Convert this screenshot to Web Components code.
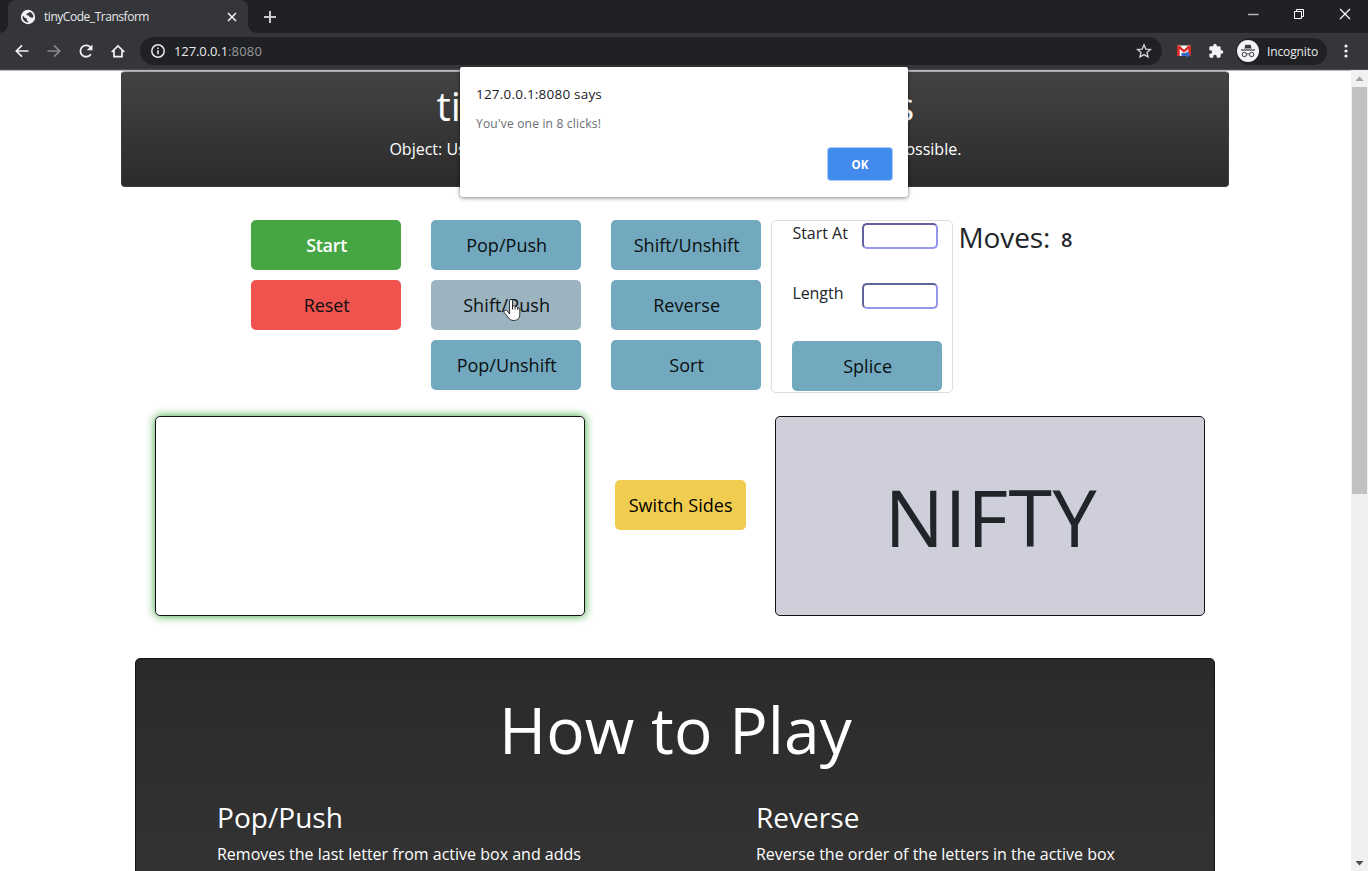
<!DOCTYPE html>
<html lang="en">
<head>
<meta charset="utf-8">
<title>tinyCode_Transform</title>
<style>
html,body{margin:0;height:100%;overflow:hidden}
body{font-family:"Open Sans","Noto Sans",sans-serif;color:#212529;background:#fff}
</style>
</head>
<body>
<browser-window></browser-window>
<script>
const define=(name,html,setup)=>{
  const t=document.createElement('template');t.innerHTML=html;
  customElements.define(name,class extends HTMLElement{
    constructor(){super();this.attachShadow({mode:'open'}).append(t.content.cloneNode(true));}
    connectedCallback(){if(setup)setup(this,this.shadowRoot);}
  });
};

/* A single line of text tracked to a given advance width. */
define('tracked-text',`<style>:host{display:inline-block;white-space:nowrap}span{display:inline-block}</style><span><slot></slot></span>`,(el,root)=>{
  const s=root.querySelector('span'),w=parseFloat(el.getAttribute('w'));
  const n=el.textContent.trim().length;
  if(w&&n)s.style.letterSpacing=((w-s.getBoundingClientRect().width)/n)+'px';
});

define('browser-tabs',`<style>
:host{display:flex;height:33px;background:#202124;align-items:stretch;font-size:12px;color:#e8eaed}
.tab{width:240px;box-sizing:border-box;margin-left:8px;background:#35363a;border-radius:8px 8px 0 0;display:flex;align-items:center;padding:0 10px 0 12px;position:relative}
.tab:before,.tab:after{content:"";position:absolute;bottom:0;width:8px;height:8px}
.tab:before{left:-8px;background:radial-gradient(circle at 0 0,transparent 7.5px,#35363a 8px)}
.tab:after{right:-8px;background:radial-gradient(circle at 100% 0,transparent 7.5px,#35363a 8px)}
.globe{margin-right:8px}.title{flex:1}
.plus{align-self:center;margin-left:15px}
.win{margin-left:auto;display:flex;align-items:center;gap:34px;padding:0 17px 5px 0}
svg{display:block}
</style>
<div class="tab"><svg class="globe" width="16" height="16" viewBox="0 0 16 16"><circle cx="8" cy="8" r="6.300" fill="#35363a" stroke="#f1f3f4" stroke-width="1.700"/><path d="M1.500 6.500L4 2.800 8.500 1.200 10 2.600 8.600 4 6.800 4.400 6.400 6.200 8.700 6.600 9.900 8.300 12.200 8.800 14.700 7.500 14.300 10.500 12 13.500 8.600 14.500 8.300 12.400 6.800 11.500 6.900 9.500 4.500 8.700 4.100 7.500z" fill="#f1f3f4"/></svg>
<tracked-text class="title" w="105">tinyCode_Transform</tracked-text>
<svg width="12" height="12" viewBox="0 0 12 12" stroke="#f1f3f4" stroke-width="1.6"><path d="M2 2l8 8M10 2l-8 8"/></svg></div>
<svg class="plus" width="14" height="14" viewBox="0 0 14 14" stroke="#c8cacd" stroke-width="2"><path d="M7 1v12M1 7h12"/></svg>
<div class="win"><svg width="12" height="12"><path d="M1 6.500h10.500" stroke="#b6b7b8" stroke-width="1.500"/></svg>
<svg width="12" height="12" fill="none" stroke="#fff"><path d="M1.500 3.500h7v7h-7zM3.500 3.500v-2h7v7h-2"/></svg>
<svg width="12" height="12" stroke="#fff" stroke-width="1.2"><path d="M1 1l10 10M11 1L1 11"/></svg></div>`);

define('browser-toolbar',`<style>
:host{display:flex;height:36px;background:#35363a;align-items:center;color:#e8eaed;padding:0 14px 0 14px;border-bottom:1px solid #4b4c50;box-sizing:content-box}
svg{display:block;flex:none}
.nav{display:flex;gap:16px;margin-right:14px}
.address{width:1022px;box-sizing:border-box;height:28px;border-radius:14px;background:#202124;display:flex;align-items:center;padding:0 10px}
.url{font-size:13px;margin-left:8px;flex:1;display:flex}.port{color:#96999d}
.ext{margin-left:14px}.puzzle{margin-left:16px}
.profile{margin-left:12px;width:91px;box-sizing:border-box;height:27px;border-radius:14px;background:#202124;display:flex;align-items:center;padding-left:1px;font-size:12px;gap:8px}
.menu{margin-left:11px}
</style>
<div class="nav">
<svg width="16" height="16" fill="none" stroke="#f1f3f4" stroke-width="1.700"><path d="M14.500 8H2.500M8 2.300L2.300 8 8 13.700"/></svg>
<svg width="16" height="16" fill="none" stroke="#88898c" stroke-width="1.700"><path d="M1.500 8h12M8 2.300L13.700 8 8 13.700"/></svg>
<svg width="16" height="16"><path d="M12.800 11.200A5.700 5.700 0 1 1 12.700 4.700" fill="none" stroke="#f1f3f4" stroke-width="1.800"/><path d="M14.500 1.500v5.700H8.800z" fill="#f1f3f4"/></svg>
<svg width="16" height="16" fill="none" stroke="#f1f3f4" stroke-width="1.700"><path d="M1.700 9L8 2.900 14.300 9M4 7.500v6.200h8V7.500"/></svg>
</div>
<div class="address"><svg width="16" height="16"><circle cx="8" cy="8" r="6.200" fill="none" stroke="#e8eaed" stroke-width="1.500"/><path d="M8 7.200v4M8 4.500v1.600" stroke="#e8eaed" stroke-width="1.600"/></svg>
<div class="url"><tracked-text w="54">127.0.0.1</tracked-text><tracked-text class="port" w="34">:8080</tracked-text></div>
<svg width="16" height="16" viewBox="0 0 16 16" fill="none" stroke="#d5d7da" stroke-width="1.300"><path d="M8 1.800l1.850 4.250 4.600.4-3.500 3.050 1.050 4.500L8 11.600 4 14l1.050-4.500-3.500-3.050 4.600-.4z"/></svg></div>
<svg class="ext" width="16" height="16"><path d="M1 2.500h14v10.500H1z" fill="#f4f4f4"/><path d="M1 13V2.500h2.500L8 6.800l4.500-4.300H15V13h-2.700V6L8 9.700 3.700 6v7z" fill="#d92b25"/><path d="M5.500 10h5V8l4 3.500-4 3.500v-2h-5z" fill="#3368c8"/></svg>
<svg class="puzzle" width="16" height="16" viewBox="0 0 24 24"><path fill="#f1f3f4" d="M20.500 11H19V7a2 2 0 0 0-2-2h-4V3.500a2.500 2.500 0 0 0-5 0V5H4a2 2 0 0 0-2 2v3.800h1.500a2.700 2.700 0 0 1 0 5.400H2V20a2 2 0 0 0 2 2h3.800v-1.500a2.700 2.700 0 0 1 5.400 0V22H17a2 2 0 0 0 2-2v-4h1.500a2.500 2.500 0 0 0 0-5z"/></svg>
<div class="profile"><svg width="22" height="22"><circle cx="11" cy="11" r="11" fill="#f1f3f4"/><path d="M7.500 8.500L8.300 5q.5-.7 1.400-.2 1.300.5 2.600 0 .9-.5 1.400.2l.8 3.500z" fill="#35363a"/><path d="M4 10h14" stroke="#35363a" stroke-width="1.200"/><g fill="none" stroke="#35363a"><circle cx="7.300" cy="14.500" r="2.200"/><circle cx="14.700" cy="14.500" r="2.200"/><path d="M9.500 14.200q1.500-.8 3 0"/></g></svg><tracked-text w="51">Incognito</tracked-text></div>
<svg class="menu" width="16" height="16" fill="#f1f3f4"><circle cx="8" cy="3" r="1.600"/><circle cx="8" cy="8" r="1.600"/><circle cx="8" cy="13" r="1.600"/></svg>`);

define('page-scrollbar',`<style>
:host{display:flex;flex-direction:column;width:17px;background:#f0f0f0;align-items:center}
svg{display:block;flex:none}.thumb{width:15px;height:407px;background:#c1c1c1}.rest{flex:1}
</style><svg width="17" height="17"><path d="M4.500 11h8l-4-4.500z" fill="#a0a0a0"/></svg><div class="thumb"></div><div class="rest"></div><svg width="17" height="17"><path d="M4.500 7h8l-4 4.500z" fill="#505050"/></svg>`);

define('game-banner',`<style>
:host{display:block;box-sizing:border-box;width:1108px;height:116px;margin-left:121.400px;border:1px solid #3c3c3c;border-top-color:#aaa;border-radius:4px;background:linear-gradient(#434343,#2b2b2b);color:#fff}
h1,p{margin:0 auto;font-weight:400;display:flex;justify-content:space-between}
h1{width:478px;font-size:40px;line-height:48px;padding-top:10px}
p{width:572px;font-size:16px;line-height:24px;padding-top:7px}
</style><h1><span>ti</span><span>s</span></h1><p><tracked-text>Object: Us</tracked-text><tracked-text>ossible.</tracked-text></p>`);

define('game-button',`<style>
:host{display:flex;align-items:center;justify-content:center;box-sizing:border-box;width:150px;height:50px;border-radius:5px;background:#72a9be;color:#0b0f11;font-size:18px;line-height:24px}
:host([kind=start]){background:#47a644;color:#fff;font-weight:600}
:host([kind=reset]){background:#f0524d}
:host([kind=switch]){background:#f0cd50;width:131px;color:#000;font-weight:500}
:host([hovered]){background:#9bb4bf}
::slotted(*){padding-left:.5px}
</style><slot></slot>`);

define('splice-panel',`<style>
:host{display:block;box-sizing:border-box;width:182px;height:173px;border:1px solid #ddd;border-radius:5px;padding:1px 0 0 20px}
.row{display:flex;height:60px;align-items:flex-start;font-size:16px;line-height:22px}
.row tracked-text{width:70px}
input{box-sizing:border-box;width:76px;height:26px;margin:1px 0 0;border:2px inset #9595f0;border-radius:5px;background:#fff}
game-button{margin-top:-1px}
</style><div class="row"><tracked-text w="55.500">Start At</tracked-text><input></div><div class="row"><tracked-text w="51">Length</tracked-text><input></div><game-button><tracked-text w="49">Splice</tracked-text></game-button>`);

define('hand-cursor',`<style>:host{position:absolute;left:72px;top:18px;width:20px;height:25px}svg{display:block}</style>
<svg width="20" height="25" viewBox="0 0 20 25"><path d="M6.500 13V3q0-1.700 1.500-1.700T9.500 3v5q2-.9 2.600.7 2-.7 2.500.9 2.200-.3 2.200 1.700v5q0 5.700-5.500 6.200H10q-3.200 0-4.700-3L1 14.200q-.3-1.500 1-2 1.200-.3 2.500 1.100L6.500 16z" fill="#fff" stroke="#222" stroke-width=".9"/><path d="M9.500 7v4.500M12.100 8.500v3M14.600 9.600v2.200" stroke="#222" stroke-width="1"/></svg>`);

define('game-controls',`<style>
:host{display:flex;margin:33px 0 0 251.400px;align-items:flex-start}
.col{display:flex;flex-direction:column;gap:10px;margin-right:30px}
.col.last{margin-right:10px}
.over{position:relative}
.moves{display:flex;align-items:baseline;margin-left:5px;line-height:34px;font-size:28px}
.moves b{font-size:20px;font-weight:600;margin-left:10.500px;position:relative;top:-1px}
</style>
<div class="col"><game-button kind="start"><tracked-text w="41">Start</tracked-text></game-button><game-button kind="reset"><tracked-text w="46">Reset</tracked-text></game-button></div>
<div class="col"><game-button><tracked-text w="81">Pop/Push</tracked-text></game-button><div class="over"><game-button hovered><tracked-text w="87">Shift/Push</tracked-text></game-button><hand-cursor></hand-cursor></div><game-button><tracked-text w="100">Pop/Unshift</tracked-text></game-button></div>
<div class="col last"><game-button><tracked-text w="106">Shift/Unshift</tracked-text></game-button><game-button><tracked-text w="67">Reverse</tracked-text></game-button><game-button><tracked-text w="35">Sort</tracked-text></game-button></div>
<splice-panel></splice-panel>
<div class="moves"><tracked-text w="92">Moves:</tracked-text><b>8</b></div>`);

define('word-box',`<style>
:host{display:flex;align-items:center;justify-content:center;box-sizing:border-box;width:430px;height:200px;border:1px solid #111;border-radius:5px;background:#cfcedb;font-size:79px;line-height:120px}
:host([active]){background:#fff;box-shadow:0 0 10px #33a033}
::slotted(*){margin:2px 0 0 1px}
</style><slot></slot>`);

define('game-board',`<style>
:host{display:flex;align-items:center;justify-content:space-between;width:1050px;margin:23px 0 0 155.400px}
game-button{margin-top:-23px}
</style><word-box active></word-box><game-button kind="switch"><tracked-text w="104">Switch Sides</tracked-text></game-button><word-box><tracked-text w="213">NIFTY</tracked-text></word-box>`);

define('how-to-play',`<style>
:host{display:block;box-sizing:border-box;width:1080px;height:500px;margin:42px 0 0 135.400px;border:1px solid #151515;border-radius:5px;background:linear-gradient(#2a2a2a,#434343 600px);color:#fff}
h2{margin:0;font-weight:400;font-size:64px;line-height:77px;padding-top:32px;text-align:center}
.cols{display:grid;grid-template-columns:539px 1fr;padding:32px 0 0 80.600px}
h3{margin:0 0 8px;font-weight:400;font-size:28px;line-height:34px}
p{margin:0;font-size:16px;line-height:24px}
</style><h2><tracked-text w="353">How to Play</tracked-text></h2>
<div class="cols"><section><h3><tracked-text w="126">Pop/Push</tracked-text></h3><p><tracked-text w="364">Removes the last letter from active box and adds</tracked-text></p></section>
<section><h3><tracked-text w="103.500">Reverse</tracked-text></h3><p><tracked-text w="359">Reverse the order of the letters in the active box</tracked-text></p></section></div>`);

define('alert-dialog',`<style>
:host{position:absolute;left:460px;top:67px;box-sizing:border-box;width:448px;height:130px;background:#fff;border-radius:2px;box-shadow:0 1px 4px rgba(0,0,0,.45),0 0 1px rgba(0,0,0,.5);padding:16px 16px 17px;display:flex;flex-direction:column}
.title{font-size:13.500px;line-height:22px;color:#202124}
.msg{font-size:12px;line-height:18px;margin-top:9.500px;color:#6a6d71}
.ok{margin:auto 0 0 auto;width:64px;height:32px;border-radius:3px;background:#428aec;box-shadow:0 0 0 1px #a9cbf8;color:#fff;font-weight:700;font-size:11.500px;display:flex;align-items:center;justify-content:center}
</style><div class="title"><tracked-text w="126">127.0.0.1:8080 says</tracked-text></div><div class="msg"><tracked-text w="125">You've one in 8 clicks!</tracked-text></div><div class="ok"><tracked-text w="17">OK</tracked-text></div>`);

define('browser-window',`<style>
:host{display:flex;flex-direction:column;width:1368px;height:871px;position:relative;overflow:hidden}
.view{display:flex;flex:1;min-height:0;border-top:1px solid #b5b5b5;background:#fff}
main{flex:1;overflow:hidden}page-scrollbar{margin-top:-1px}
</style><browser-tabs></browser-tabs><browser-toolbar></browser-toolbar>
<div class="view"><main><game-banner></game-banner><game-controls></game-controls><game-board></game-board><how-to-play></how-to-play></main><page-scrollbar></page-scrollbar></div>
<alert-dialog></alert-dialog>`);
</script>
</body>
</html>
